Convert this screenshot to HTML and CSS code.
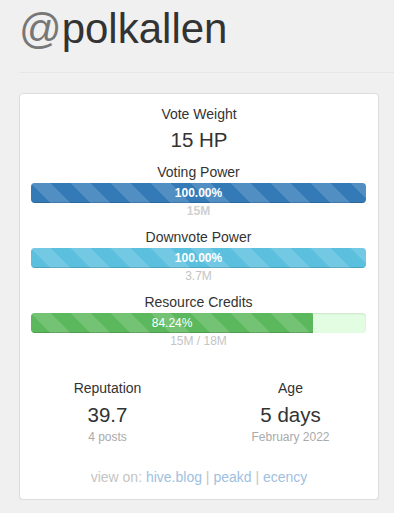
FILE: index.html
```html
<!DOCTYPE html>
<html lang="en">
<head>
  <meta charset="UTF-8" />
  <title>@polkallen</title>
  <link rel="stylesheet" href="styles.css">
</head>
<body>
  <div class="page">
    <h1 class="username"><span class="at">@</span>polkallen</h1>
    <hr class="divider">

    <!-- Account panel -->
    <div class="panel">
      <div class="stat-label">Vote Weight</div>
      <div class="stat-value">15 HP</div>

      <div class="meter">
        <div class="stat-label">Voting Power</div>
        <div class="progress">
          <div class="progress-bar bar-blue" style="width: 100%">100.00%</div>
        </div>
        <div class="meter-sub bold">15M</div>
      </div>

      <div class="meter">
        <div class="stat-label">Downvote Power</div>
        <div class="progress">
          <div class="progress-bar bar-cyan" style="width: 100%">100.00%</div>
        </div>
        <div class="meter-sub">3.7M</div>
      </div>

      <div class="meter">
        <div class="stat-label">Resource Credits</div>
        <div class="progress progress-rc">
          <div class="progress-bar bar-green" style="width: 84.24%">84.24%</div>
        </div>
        <div class="meter-sub">15M / 18M</div>
      </div>

      <div class="stats-row">
        <div class="stat-col">
          <div class="stat-label">Reputation</div>
          <div class="stat-value">39.7</div>
          <div class="stat-note">4 posts</div>
        </div>
        <div class="stat-col">
          <div class="stat-label">Age</div>
          <div class="stat-value">5 days</div>
          <div class="stat-note">February 2022</div>
        </div>
      </div>

      <div class="view-on">
        view on: <a href="#">hive.blog</a> | <a href="#">peakd</a> | <a href="#">ecency</a>
      </div>
    </div>
  </div>
</body>
</html>
```

FILE: styles.css
```css
body {
  font-family: "Liberation Sans", Arial, sans-serif;
  font-size: 14px;
  line-height: 20px;
  background: #f0f0f0;
  color: #333;
  margin: 0;
  overflow: hidden;
}

.page {
  padding: 5px 0 0 19px;
}

/* Header */
.username {
  font-size: 42px;
  line-height: 48px;
  font-weight: 400;
  margin: 0;
  color: #333;
}
.username .at {
  color: #777;
}

.divider {
  border: 0;
  border-top: 1px solid #e6e6e6;
  margin: 19px 0 20px 0;
}

/* Panel */
.panel {
  width: 358px;
  box-sizing: content-box;
  background: #fff;
  border: 1px solid #ddd;
  border-radius: 4px;
  box-shadow: 0 1px 1px rgba(0, 0, 0, 0.05);
  padding: 10px 0 12px 0;
  text-align: center;
}

.stat-label {
  font-size: 14px;
  line-height: 20px;
  margin-bottom: 3px;
}
.stat-value {
  font-size: 20.5px;
  line-height: 26px;
}

.meter {
  padding: 0 12px 0 11px;
  margin-top: 9px;
}
.meter + .meter {
  margin-top: 8px;
}
.meter .stat-label {
  margin-bottom: 1px;
}
.meter-sub {
  font-size: 12px;
  line-height: 16px;
  color: #c4c4c4;
}
.meter-sub.bold {
  font-weight: 700;
  color: #d0d0d0;
}

/* Progress bars */
.progress {
  height: 20px;
  border-radius: 4px;
  overflow: hidden;
  background: #f5f5f5;
  box-shadow: inset 0 1px 2px rgba(0, 0, 0, 0.1);
  display: flex;
}
.progress-rc {
  background: #e2fde2;
}
.progress-bar {
  height: 20px;
  font-size: 12px;
  line-height: 20px;
  font-weight: 700;
  color: #fff;
  text-align: center;
  box-shadow: inset 0 -1px 0 rgba(0, 0, 0, 0.15);
  background-image: linear-gradient(45deg, rgba(255, 255, 255, 0.15) 25%, transparent 25%, transparent 50%, rgba(255, 255, 255, 0.15) 50%, rgba(255, 255, 255, 0.15) 75%, transparent 75%, transparent);
  background-size: 40px 40px;
}
.bar-blue { background-color: #337ab7; }
.bar-cyan { background-color: #5bc0de; }
.bar-green { background-color: #5cb85c; font-weight: 400; }

/* Reputation / Age */
.stats-row {
  display: flex;
  margin: 29px -4px 0 -4px;
}
.stat-col {
  flex: 1;
}
.stat-col .stat-label {
  margin-bottom: 4px;
}
.stat-note {
  font-size: 12px;
  line-height: 16px;
  color: #aaa;
  margin-top: 1px;
}

.view-on {
  margin-top: 22px;
  color: #c4c4c4;
}
.view-on a {
  color: #9ebfdf;
  text-decoration: none;
}
```
